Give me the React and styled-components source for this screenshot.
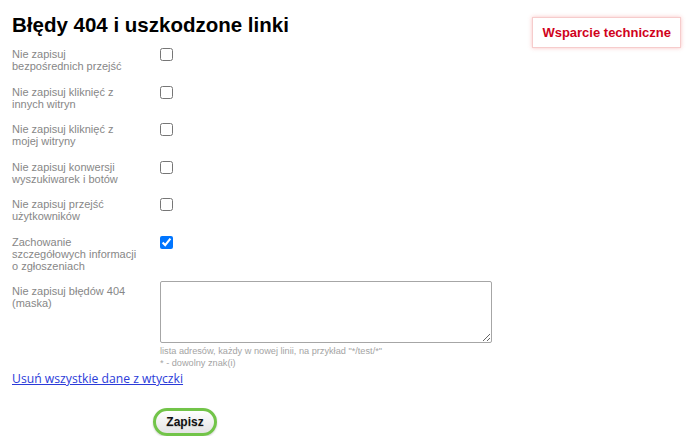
import React from "react";
import styled, { createGlobalStyle } from "styled-components";

const Global = createGlobalStyle`
  html, body { margin: 0; padding: 0; background: #fff; }
  body { font-family: "Liberation Sans", Arial, sans-serif; }
`;

const Page = styled.div`
  padding: 0 19px 0 12px;
`;

const Header = styled.div`
  display: flex;
  justify-content: space-between;
  align-items: flex-start;
  height: 48px;
`;

const Title = styled.h1`
  margin: 13px 0 0;
  font-size: 20.5px;
  line-height: 24px;
  font-weight: bold;
  color: #000;
`;

const SupportButton = styled.a`
  margin-top: 17px;
  box-sizing: border-box;
  height: 31px;
  padding: 0 9px;
  display: flex;
  align-items: center;
  background: #fff;
  border: 1px solid #f6cccc;
  box-shadow: 0 0 4px rgba(240, 80, 80, 0.35);
  color: #d0021b;
  font-size: 13px;
  font-weight: bold;
  text-decoration: none;
`;

const Row = styled.div`
  display: grid;
  grid-template-columns: 148px 1fr;
  margin-bottom: ${(p) => p.$gap}px;
`;

const Label = styled.div`
  font-size: 11px;
  line-height: 12px;
  color: #878787;
  padding-right: 22px;
  padding-top: ${(p) => p.$offset || 0}px;
`;

const Check = styled.input.attrs({ type: "checkbox" })`
  margin: 0;
  width: 13px;
  height: 13px;
`;

const Control = styled.div`
  display: flex;
  flex-direction: column;
  align-items: flex-start;
`;

const Area = styled.textarea`
  box-sizing: border-box;
  width: 332px;
  height: 62px;
  margin: 0;
  border: 1px solid #a6a6a6;
  border-radius: 2px;
  font-family: "Liberation Sans", Arial, sans-serif;
`;

const Help = styled.div`
  margin-top: 2px;
  font-size: 9.2px;
  line-height: 12px;
  color: #a4a4a4;
`;

const Link = styled.a`
  display: inline-block;
  margin-top: 2px;
  font-family: "Open Sans", sans-serif;
  font-size: 12.2px;
  line-height: 16px;
  color: #2b3bd9;
  text-decoration: underline;
`;

const ButtonRow = styled.div`
  padding: 21px 0 0 141px;
`;

const SaveButton = styled.button`
  box-sizing: border-box;
  width: 64px;
  height: 28px;
  border: 3px solid #72c449;
  border-radius: 14px;
  background: linear-gradient(#ffffff, #e4e4e4);
  box-shadow: 0 1px 2px rgba(0, 0, 0, 0.2);
  font-family: "Liberation Sans", Arial, sans-serif;
  font-size: 12px;
  font-weight: bold;
  color: #111;
  text-shadow: 0 1px 1px rgba(0, 0, 0, 0.15);
  padding: 0;
  cursor: pointer;
`;

const rows = [
  { label: "Nie zapisuj bezpośrednich przejść", checked: false },
  { label: "Nie zapisuj kliknięć z innych witryn", checked: false },
  { label: "Nie zapisuj kliknięć z mojej witryny", checked: false },
  { label: "Nie zapisuj konwersji wyszukiwarek i botów", checked: false },
  { label: "Nie zapisuj przejść użytkowników", checked: false },
  { label: "Zachowanie szczegółowych informacji o zgłoszeniach", checked: true },
];

export default function App() {
  return (
    <>
      <Global />
      <Page>
        <Header>
          <Title>Błędy 404 i uszkodzone linki</Title>
          <SupportButton href="#">Wsparcie techniczne</SupportButton>
        </Header>
        {rows.map((r, i) => (
          <Row key={i} $gap={i === rows.length - 1 ? 9.5 : 13.5}>
            <Label>{r.label}</Label>
            <Control>
              <Check defaultChecked={r.checked} />
            </Control>
          </Row>
        ))}
        <Row $gap={0}>
          <Label $offset={4}>Nie zapisuj błędów 404 (maska)</Label>
          <Control>
            <Area />
            <Help>
              lista adresów, każdy w nowej linii, na przykład "*/test/*"
              <br />* - dowolny znak(i)
            </Help>
          </Control>
        </Row>
        <Link href="#">Usuń wszystkie dane z wtyczki</Link>
        <ButtonRow>
          <SaveButton>Zapisz</SaveButton>
        </ButtonRow>
      </Page>
    </>
  );
}
